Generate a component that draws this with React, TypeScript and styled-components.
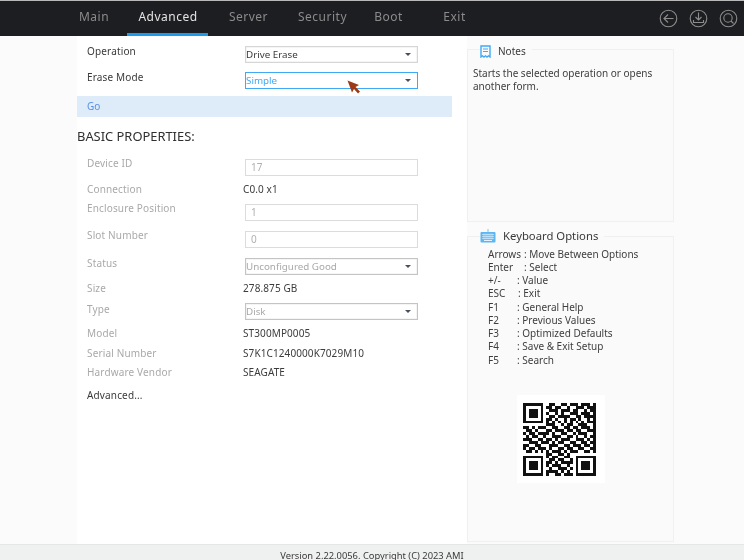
import React from "react";
import styled, { createGlobalStyle } from "styled-components";

const GlobalStyle = createGlobalStyle`
  html, body {
    margin: 0;
    padding: 0;
    background: #fbfbfb;
  }
  * {
    box-sizing: border-box;
  }
`;

const Page = styled.div`
  width: 744px;
  height: 560px;
  display: flex;
  flex-direction: column;
  overflow: hidden;
  font-family: "Noto Sans", "Open Sans", sans-serif;
  font-size: 10px;
  color: #333;
  background: #fbfbfb;
  filter: blur(0.35px);
`;

const Header = styled.header`
  height: 36px;
  flex: none;
  display: flex;
  justify-content: space-between;
  background: #1d1e22;
  border-top: 1px solid #b9b9b9;
`;

const Tabs = styled.nav`
  display: grid;
  grid-template-columns: 67px 81px 80px 68px 64px 68px;
  padding-left: 60px;
`;

const Tab = styled.div<{ $active?: boolean }>`
  display: flex;
  align-items: center;
  justify-content: center;
  padding: 0 0 2px 1px;
  font-size: 12px;
  letter-spacing: 0.5px;
  color: ${(p) => (p.$active ? "#e4e4e4" : "#8b8b8b")};
  border-bottom: 3px solid ${(p) => (p.$active ? "#1e9be8" : "transparent")};
`;

const HeaderIcons = styled.div`
  display: flex;
  align-items: center;
  gap: 11px;
  padding-right: 6px;
`;

const HeaderIcon = styled.svg`
  width: 19px;
  height: 19px;
  fill: none;
  stroke: #8c8c8c;
  stroke-width: 1.1;
`;

const Body = styled.div`
  flex: 1;
  display: flex;
  min-height: 0;
`;

const Main = styled.main`
  width: 390px;
  margin-left: 77px;
  flex: none;
  background: #fff;
  padding-top: 10px;
`;

const Row = styled.div<{ $gap?: number; $height?: number }>`
  display: flex;
  align-items: flex-start;
  width: 375px;
  margin-top: ${(p) => p.$gap ?? 0}px;
  height: ${(p) => p.$height ?? 17}px;
  padding-left: 10px;
`;

const Label = styled.div<{ $disabled?: boolean; $short?: boolean; $shift?: number }>`
  width: ${(p) => (p.$short ? 156 : 158)}px;
  flex: none;
  margin-top: ${(p) => p.$shift ?? -1}px;
  line-height: 12px;
  letter-spacing: 0.15px;
  color: ${(p) => (p.$disabled ? "#a9a9a9" : "#3a3a3a")};
`;

const Value = styled.div`
  line-height: 12px;
  margin-top: -1px;
  letter-spacing: 0.1px;
  color: #3c3c3c;
`;

const Field = styled.div<{ $disabled?: boolean; $focused?: boolean }>`
  position: relative;
  width: 173px;
  height: 17px;
  display: flex;
  align-items: center;
  justify-content: space-between;
  padding: 0 6px 1px 0;
  font-size: 9.8px;
  background: #fff;
  border: 1px solid ${(p) => (p.$focused ? "#3fa9f5" : p.$disabled ? "#c4c4c4" : "#d6d6d6")};
  color: ${(p) => (p.$focused ? "#3fa9f5" : p.$disabled ? "#a9a9a9" : "#3a3a3a")};
  box-shadow: ${(p) => (p.$focused ? "none" : "inset 0 0 0 0.5px #ececec")};
`;

const TextField = styled.div`
  width: 173px;
  height: 17px;
  display: flex;
  align-items: center;
  padding: 0 0 2px 5px;
  background: #fff;
  border: 1px solid #dcdcdc;
  color: #b0b0b0;
`;

const Caret = styled.span`
  width: 0;
  height: 0;
  margin-top: 1px;
  border-left: 3px solid transparent;
  border-right: 3px solid transparent;
  border-top: 3px solid #4a4f5c;
`;

const Cursor = styled.svg`
  position: absolute;
  left: 101px;
  top: 7px;
  width: 14px;
  height: 14px;
`;

const GoBar = styled.div`
  width: 375px;
  height: 21px;
  margin-top: 7px;
  padding: 0 0 2px 10px;
  display: flex;
  align-items: center;
  background: #ddecf8;
  color: #5b8fe6;
`;

const SectionTitle = styled.h2`
  margin: 10px 0 0;
  height: 18px;
  line-height: 18px;
  font-size: 12.9px;
  font-weight: 400;
  color: #2f2f2f;
`;

const Aside = styled.aside`
  width: 207px;
  flex: none;
  padding-top: 4px;
  display: flex;
  flex-direction: column;
  gap: 7px;
`;

const Panel = styled.fieldset<{ $height: number }>`
  margin: 0;
  padding: 0 5px;
  height: ${(p) => p.$height}px;
  min-width: 0;
  border: 1px solid #f0f0f0;
  background: #fafafa;
`;

const PanelTitle = styled.legend<{ $size?: number; $drop?: number }>`
  display: flex;
  align-items: center;
  gap: 7px;
  margin-left: 7px;
  padding: ${(p) => p.$drop ?? 0}px 6px 0 0;
  font-size: ${(p) => p.$size ?? 10}px;
  line-height: 14px;
  color: #3a3a3a;
`;

const NotesText = styled.p`
  margin: 9px 0 0;
  line-height: 13px;
  color: #3e3e3e;
`;

const KeyList = styled.div`
  padding: 4.5px 0 0 15px;
  line-height: 13.25px;
  color: #3e3e3e;
`;

const KeyRow = styled.div`
  display: flex;
  white-space: pre;
`;

const KeyName = styled.span<{ $width: number }>`
  width: ${(p) => p.$width}px;
  flex: none;
`;

const QrBox = styled.div`
  width: 88px;
  height: 88px;
  margin: 28.5px 0 0 44px;
  padding: 8px 6px;
  display: flex;
  background: #fff;
`;

const QrSvg = styled.svg`
  width: 73px;
  height: 73px;
`;

const Footer = styled.footer`
  height: 16px;
  flex: none;
  display: flex;
  align-items: center;
  justify-content: center;
  padding-top: 5px;
  font-size: 9.35px;
  color: #3a3a3a;
  background: #eff1f0;
  border-top: 1px solid #e4e7e6;
`;

const tabs = ["Main", "Advanced", "Server", "Security", "Boot", "Exit"];

const keys = [
  { name: "Arrows", width: 36, text: "Move Between Options" },
  { name: "Enter", width: 36, text: "Select" },
  { name: "+/-", width: 29, text: "Value" },
  { name: "ESC", width: 30, text: "Exit" },
  { name: "F1", width: 29, text: "General Help" },
  { name: "F2", width: 29, text: "Previous Values" },
  { name: "F3", width: 29, text: "Optimized Defaults" },
  { name: "F4", width: 29, text: "Save & Exit Setup" },
  { name: "F5", width: 29, text: "Search" },
];

const qr = [
  "1111111001100110111011101",
  "1000001011011001001110111",
  "1011101001110111011001011",
  "1011101010010100111011101",
  "1011101001101111001101111",
  "1000001011010010110100101",
  "1111111010101010101010111",
  "0000000011100101100111001",
  "1101011100110011011011101",
  "0110100011011101101100111",
  "1011011110100110010111001",
  "0101100100111001101001011",
  "1110011011010111001110101",
  "0011101110101100110011011",
  "1100110001110011011101101",
  "1011011101001101100110011",
  "0110101010111010111001101",
  "0000000011001101000000000",
  "1111111010110011001111111",
  "1000001001101100101000001",
  "1011101011010111101011101",
  "1011101010111001001011101",
  "1011101001001110101011101",
  "1000001011110101001000001",
  "1111111010011011101111111",
];

const QrCode = () => (
  <QrSvg viewBox="0 0 25 25" shapeRendering="crispEdges">
    {qr.map((line, y) =>
      line.split("").map((c, x) => (c === "1" ? <rect key={`${x}-${y}`} x={x} y={y} width="1" height="1" fill="#111" /> : null))
    )}
  </QrSvg>
);

const NotesIcon = () => (
  <svg width="11" height="13" viewBox="0 0 11 13" fill="none">
    <path d="M1 1h9v11L8.5 10.8 7 12 5.5 10.8 4 12 2.5 10.8 1 12z" stroke="#3fa9f5" strokeWidth="1.4" />
    <path d="M3 4h5M3 6.5h5" stroke="#3fa9f5" strokeWidth="1" />
  </svg>
);

const KeyboardIcon = () => (
  <svg width="16" height="14" viewBox="0 0 16 14" fill="none">
    <path d="M8 3V0" stroke="#7cc4f5" strokeWidth="1" />
    <rect x="0.5" y="3" width="15" height="10.5" rx="1" fill="#5db5f2" />
    <path d="M2 5.5h12M2 7.5h12M2 9.5h12M4 4.5v6M6 4.5v6M8 4.5v6M10 4.5v6M12 4.5v6" stroke="#cfe8fb" strokeWidth="0.7" />
    <path d="M4 11.5h8" stroke="#e3f2fd" strokeWidth="1" />
  </svg>
);

const App: React.FC = () => {
  return (
    <Page>
      <GlobalStyle />
      <Header>
        <Tabs>
          {tabs.map((t) => (
            <Tab key={t} $active={t === "Advanced"}>
              {t}
            </Tab>
          ))}
        </Tabs>
        <HeaderIcons>
          <HeaderIcon viewBox="0 0 19 19">
            <circle cx="9.5" cy="9.5" r="8.3" />
            <path d="M14.5 9.5H5M9 5.5l-4 4 4 4" />
          </HeaderIcon>
          <HeaderIcon viewBox="0 0 19 19">
            <circle cx="9.5" cy="9.5" r="8.3" />
            <path d="M9.5 3.5v7.5M6.5 8l3 3 3-3M4.5 11v2.5h10V11" />
          </HeaderIcon>
          <HeaderIcon viewBox="0 0 19 19">
            <circle cx="9.5" cy="9.5" r="8.3" />
            <circle cx="9" cy="9" r="4.2" />
            <path d="M12 12l2.5 2.5" />
          </HeaderIcon>
        </HeaderIcons>
      </Header>
      <Body>
        <Main>
          <Row>
            <Label>Operation</Label>
            <Field>
              Drive Erase
              <Caret />
            </Field>
          </Row>
          <Row $gap={9}>
            <Label>Erase Mode</Label>
            <Field $focused>
              Simple
              <Caret />
              <Cursor viewBox="0 0 14 14">
                <path d="M0.5 0.5L12 5 8.5 7 13 11.5 11 13.5 7 9 5 12.5z" fill="#9c3a17" />
              </Cursor>
            </Field>
          </Row>
          <GoBar>Go</GoBar>
          <SectionTitle>BASIC PROPERTIES:</SectionTitle>
          <Row $gap={14}>
            <Label $disabled $shift={-2}>Device ID</Label>
            <TextField>17</TextField>
          </Row>
          <Row $gap={8} $height={12}>
            <Label $disabled $short>Connection</Label>
            <Value>C0.0 x1</Value>
          </Row>
          <Row $gap={8}>
            <Label $disabled $shift={-2}>Enclosure Position</Label>
            <TextField>1</TextField>
          </Row>
          <Row $gap={10}>
            <Label $disabled $shift={-2}>Slot Number</Label>
            <TextField>0</TextField>
          </Row>
          <Row $gap={10}>
            <Label $disabled>Status</Label>
            <Field $disabled>
              Unconfigured Good
              <Caret />
            </Field>
          </Row>
          <Row $gap={8} $height={12}>
            <Label $disabled $short>Size</Label>
            <Value>278.875 GB</Value>
          </Row>
          <Row $gap={8}>
            <Label $disabled $shift={0}>Type</Label>
            <Field $disabled>
              Disk
              <Caret />
            </Field>
          </Row>
          <Row $gap={8} $height={12}>
            <Label $disabled $short>Model</Label>
            <Value>ST300MP0005</Value>
          </Row>
          <Row $gap={8} $height={12}>
            <Label $disabled $short>Serial Number</Label>
            <Value>S7K1C1240000K7029M10</Value>
          </Row>
          <Row $gap={7} $height={12}>
            <Label $disabled $short>Hardware Vendor</Label>
            <Value>SEAGATE</Value>
          </Row>
          <Row $gap={11} $height={12}>
            <Label>Advanced...</Label>
          </Row>
        </Main>
        <Aside>
          <Panel $height={182}>
            <PanelTitle $drop={4}>
              <NotesIcon />
              Notes
            </PanelTitle>
            <NotesText>Starts the selected operation or opens another form.</NotesText>
          </Panel>
          <Panel $height={313}>
            <PanelTitle $size={11.3}>
              <KeyboardIcon />
              Keyboard Options
            </PanelTitle>
            <KeyList>
              {keys.map((k) => (
                <KeyRow key={k.name}>
                  <KeyName $width={k.width}>{k.name}</KeyName>: {k.text}
                </KeyRow>
              ))}
            </KeyList>
            <QrBox>
              <QrCode />
            </QrBox>
          </Panel>
        </Aside>
      </Body>
      <Footer>Version 2.22.0056. Copyright (C) 2023 AMI</Footer>
    </Page>
  );
};

export default App;
